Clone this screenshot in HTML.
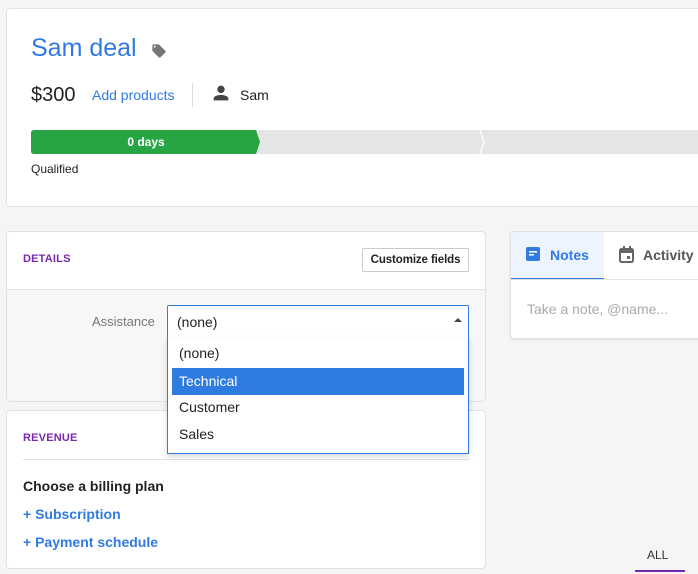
<!DOCTYPE html>
<html><head><style>
*{box-sizing:border-box;margin:0;padding:0}
body{width:698px;height:574px;overflow:hidden;background:#f5f5f5;font-family:"Liberation Sans",sans-serif;position:relative;color:#222}
.a{position:absolute}
.card{position:absolute;background:#fff;border:1px solid #e2e2e2;border-radius:4px}
.blue{color:#317ae2}
.h{font-size:11px;font-weight:bold;color:#7a28b0;letter-spacing:.2px}
</style></head><body>
<div class="card" style="left:6px;top:8px;width:700px;height:199px"></div>
<div class="a blue" style="left:31px;top:34px;font-size:25px">Sam deal</div>
<svg class="a" style="left:151px;top:43px" width="16" height="16" viewBox="0 0 24 24"><path fill="#777" d="M21.4 11.6l-9-9C12.1 2.2 11.6 2 11 2H4c-1.1 0-2 .9-2 2v7c0 .6.2 1.1.6 1.4l9 9c.4.4.9.6 1.4.6s1-.2 1.4-.6l7-7c.4-.4.6-.9.6-1.4s-.2-1.1-.6-1.4zM5.5 7C4.7 7 4 6.3 4 5.5S4.7 4 5.5 4 7 4.7 7 5.5 6.3 7 5.5 7z"/></svg>
<div class="a" style="left:31px;top:84px;font-size:20px">$300</div>
<div class="a blue" style="left:92px;top:87px;font-size:14px">Add products</div>
<div class="a" style="left:192px;top:83px;width:1px;height:24px;background:#ddd"></div>
<svg class="a" style="left:210px;top:82px" width="22" height="22" viewBox="0 0 24 24"><path fill="#444" d="M12 12c2.2 0 4-1.8 4-4s-1.8-4-4-4-4 1.8-4 4 1.8 4 4 4zm0 2c-2.7 0-8 1.3-8 4v2h16v-2c0-2.700-5.3-4-8-4z"/></svg>
<div class="a" style="left:240px;top:87px;font-size:14px">Sam</div>
<div class="a" style="left:31px;top:130px;width:670px;height:24px;background:#e4e5e5;border-radius:3px 0 0 3px"></div>
<svg class="a" style="left:31px;top:130px" width="660" height="24"><path d="M3 0H225L229 12L225 24H3Q0 24 0 21V3Q0 0 3 0Z" fill="#27a544"/><path d="M449 0L453 12L449 24" fill="none" stroke="#fff" stroke-width="1.2"/></svg>
<div class="a" style="left:31px;top:135px;width:230px;text-align:center;color:#fff;font-size:12px;font-weight:bold">0 days</div>
<div class="a" style="left:31px;top:162px;font-size:12px">Qualified</div>

<div class="card" style="left:6px;top:231px;width:480px;height:171px;overflow:hidden">
<div class="a" style="left:0;top:57px;width:480px;height:114px;background:#f7f7f7;border-top:1px solid #e2e2e2"></div>
</div>
<div class="a h" style="left:23px;top:253px">DETAILS</div>
<div class="a" style="left:362px;top:248px;width:107px;height:24px;border:1px solid #ccc;border-radius:2px;font-size:11.5px;font-weight:bold;text-align:center;line-height:22px;background:#fff;letter-spacing:-.1px">Customize fields</div>
<div class="a" style="left:92px;top:314px;font-size:13px;color:#777">Assistance</div>
<div class="a" style="left:167px;top:305px;width:302px;height:33px;border:1px solid #317ae2;border-radius:2px 2px 0 0;background:#fff;font-size:14px;padding:8px 0 0 9px">(none)</div>
<div class="a" style="left:454px;top:318px;width:0;height:0;border-left:4px solid transparent;border-right:4px solid transparent;border-bottom:4px solid #444"></div>

<div class="card" style="left:6px;top:410px;width:480px;height:159px"></div>
<div class="a h" style="left:23px;top:432px">REVENUE</div>
<div class="a" style="left:23px;top:459px;width:446px;height:1px;background:#e2e2e2"></div>
<div class="a" style="left:23px;top:478px;font-size:14px;font-weight:bold">Choose a billing plan</div>
<div class="a blue" style="left:23px;top:506px;font-size:14px;font-weight:bold">+ Subscription</div>
<div class="a blue" style="left:23px;top:534px;font-size:14px;font-weight:bold">+ Payment schedule</div>

<div class="a" style="left:167px;top:337px;width:302px;height:117px;border:1px solid #317ae2;border-top:none;background:#fff;box-shadow:0 3px 6px rgba(0,0,0,.15);font-size:14px">
<div class="a" style="left:11px;top:8px">(none)</div>
<div class="a" style="left:4px;top:31px;width:292px;height:27px;background:#2f7be0;color:#fff;padding:5px 0 0 7px">Technical</div>
<div class="a" style="left:11px;top:62px">Customer</div>
<div class="a" style="left:11px;top:89px">Sales</div>
</div>

<div class="card" style="left:510px;top:231px;width:200px;height:108px;box-shadow:0 1px 2px rgba(0,0,0,.1);overflow:hidden">
<div class="a" style="left:0;top:0;width:93px;height:48px;background:#edf4fd;border-bottom:2px solid #317ae2"></div>
<div class="a" style="left:0;top:47px;width:200px;height:1px;background:#e2e2e2"></div>
</div>
<svg class="a" style="left:526px;top:247px" width="15" height="15" viewBox="0 0 15 15"><rect x="0" y="0" width="14" height="14" rx="2" fill="#317ae2"/><rect x="3" y="4" width="8" height="1.6" fill="#fff"/><rect x="3" y="7" width="5" height="1.6" fill="#fff"/></svg>
<div class="a blue" style="left:550px;top:247px;font-size:14px;font-weight:bold">Notes</div>
<svg class="a" style="left:619px;top:246px" width="16" height="17" viewBox="0 0 16 17"><rect x="1" y="3" width="13" height="13" rx="1.5" fill="none" stroke="#666" stroke-width="2"/><rect x="1" y="3" width="13" height="4" fill="#666"/><rect x="4" y="0" width="2" height="4" fill="#666"/><rect x="10" y="0" width="2" height="4" fill="#666"/><rect x="8" y="10" width="3" height="3" fill="#666"/></svg>
<div class="a" style="left:643px;top:247px;font-size:14px;font-weight:bold;color:#555">Activity</div>
<div class="a" style="left:527px;top:301px;font-size:14px;color:#aaa">Take a note, @name...</div>

<div class="a" style="left:647px;top:548px;font-size:12px;color:#333">ALL</div>
<div class="a" style="left:635px;top:570px;width:50px;height:2px;background:#7a28b0"></div>
</body></html>
